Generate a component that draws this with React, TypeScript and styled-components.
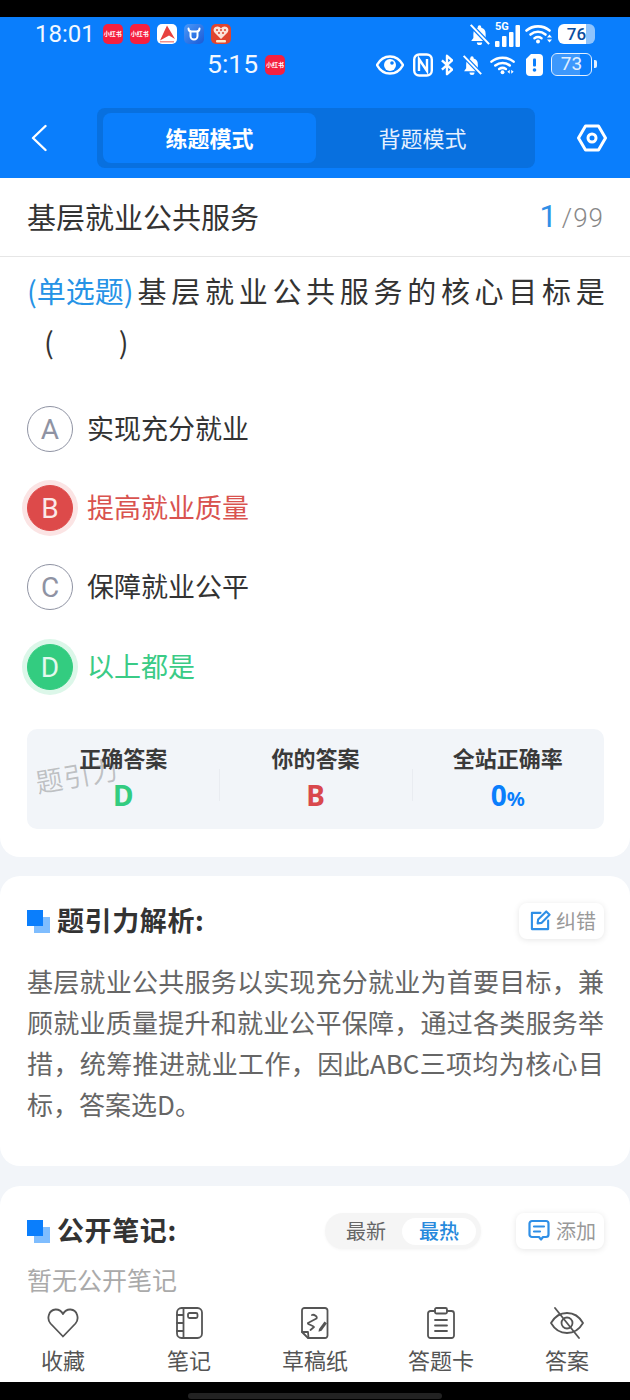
import * as React from 'react';
import styled, { createGlobalStyle } from 'styled-components';

const CJK = `"Noto Sans CJK SC", "Noto Sans", sans-serif`;
const LATIN = `Roboto, "Noto Sans CJK SC", sans-serif`;

const GlobalStyle = createGlobalStyle`
  html, body {
    margin: 0;
    padding: 0;
    background: #000;
  }
  * {
    box-sizing: border-box;
  }
`;

const Page = styled.div`
  width: 630px;
  height: 1400px;
  display: flex;
  flex-direction: column;
  overflow: hidden;
  background: #f2f5f9;
  font-family: ${CJK};
`;

const TopBlack = styled.div`
  height: 17px;
  flex: none;
  background: #000;
`;

const Header = styled.header`
  height: 161px;
  flex: none;
  background: #0a7efc;
  color: #fff;
`;

const StatusRow = styled.div<{ $left: number; $right: number; $height: number }>`
  height: ${(p) => p.$height}px;
  padding: 0 ${(p) => p.$right}px 0 ${(p) => p.$left}px;
  display: flex;
  align-items: center;
  justify-content: space-between;
`;

const Group = styled.div<{ $gap: number }>`
  display: flex;
  align-items: center;
  gap: ${(p) => p.$gap}px;
`;

const Time = styled.span<{ $size: number }>`
  font-family: ${LATIN};
  font-size: ${(p) => p.$size}px;
  line-height: 1;
  color: #f2f8ff;
`;

const AppIcon = styled.div<{ $bg: string }>`
  width: 20px;
  height: 20px;
  border-radius: 5px;
  background: ${(p) => p.$bg};
  color: #fff;
  display: flex;
  align-items: center;
  justify-content: center;
  overflow: hidden;
  font-size: 6px;
  font-weight: 700;
  white-space: nowrap;
  line-height: 1;
`;

const BatteryFull = styled.div`
  width: 37px;
  height: 20px;
  border-radius: 6px;
  background: linear-gradient(90deg, #fff 0, #fff 76%, #8fc4fd 76%, #8fc4fd 100%);
  color: #0a4ea0;
  font-family: ${LATIN};
  font-size: 17px;
  font-weight: 500;
  line-height: 20px;
  text-align: center;
`;

const BatteryOutline = styled.div`
  position: relative;
  width: 41px;
  height: 23px;
  margin-right: 4px;
  border: 1.5px solid #e3f0ff;
  border-radius: 6px;
  background: linear-gradient(90deg, #3d98fc 0, #3d98fc 73%, transparent 73%);
  background-clip: padding-box;
  color: #e3f0ff;
  font-family: ${LATIN};
  font-size: 19px;
  line-height: 20px;
  text-align: center;

  &::after {
    content: '';
    position: absolute;
    right: -6px;
    top: 6px;
    width: 3px;
    height: 8px;
    border-radius: 0 2px 2px 0;
    background: #e3f0ff;
  }
`;

const NavRow = styled.div`
  height: 60px;
  margin-top: 30px;
  display: flex;
  align-items: center;
`;

const BackSlot = styled.div`
  width: 97px;
  padding-left: 31px;
  display: flex;
`;

const ModeSwitch = styled.div`
  width: 438px;
  height: 60px;
  padding: 5px 6px;
  display: grid;
  grid-template-columns: 213px 1fr;
  border-radius: 8px;
  background: #0870df;
`;

const ModeTab = styled.div<{ $active?: boolean }>`
  display: flex;
  align-items: center;
  justify-content: center;
  padding-bottom: 3px;
  border-radius: 8px;
  font-size: 22px;
  font-weight: ${(p) => (p.$active ? 700 : 400)};
  background: ${(p) => (p.$active ? '#0a7efc' : 'transparent')};
  color: ${(p) => (p.$active ? '#fff' : '#e6f1ff')};
`;

const GearSlot = styled.div`
  flex: 1;
  display: flex;
  justify-content: center;
  padding-left: 19px;
`;

const Scroll = styled.main`
  flex: 1;
  min-height: 0;
  overflow: hidden;
`;

const QuestionCard = styled.section`
  height: 679px;
  background: #fff;
  border-radius: 0 0 20px 20px;
`;

const TitleRow = styled.div`
  height: 79px;
  padding: 0 26px 2px 27px;
  display: flex;
  align-items: center;
  justify-content: space-between;
  border-bottom: 1px solid #e6e6e6;
`;

const PaperTitle = styled.div`
  font-size: 29px;
  line-height: 1;
  color: #333;
`;

const Counter = styled.div`
  display: flex;
  align-items: baseline;
  font-family: ${LATIN};
  font-size: 26px;
  font-weight: 300;
  letter-spacing: 1px;
  color: #888;
`;

const CounterNow = styled.span`
  font-size: 31px;
  font-weight: 400;
  color: #2f8fe6;
  margin-right: 4px;
`;

const Question = styled.div`
  margin: 8px 5px 0 27px;
  font-size: 29px;
  line-height: 51px;
  color: #333;
  letter-spacing: 4.7px;
`;

const QuestionType = styled.span`
  color: #2693e6;
  letter-spacing: 0;
  margin-right: 4px;
`;

const QuestionBlank = styled.div`
  padding-left: 17px;
  white-space: pre;
  letter-spacing: 0;
`;

const OptionList = styled.div`
  margin: 39px 0 0 27px;
  display: flex;
  flex-direction: column;
  gap: 33px;
`;

const colors = {
  plain: { text: '#333', circle: 'transparent', border: '#8f93a3', letter: '#8f93a3', halo: 'transparent' },
  wrong: { text: '#d9534f', circle: '#dd4a4a', border: '#dd4a4a', letter: '#fbe9e9', halo: '#fbe4e4' },
  right: { text: '#3acb86', circle: '#33cc80', border: '#33cc80', letter: '#e3f9ee', halo: '#dcf7e9' },
};

type OptionKind = keyof typeof colors;

const Option = styled.div`
  display: flex;
  align-items: center;
  gap: 14px;
  height: 46px;

  &:last-child {
    margin-top: 1px;
  }
`;

const OptionCircle = styled.div<{ $kind: OptionKind }>`
  width: 46px;
  height: 46px;
  flex: none;
  display: flex;
  align-items: center;
  justify-content: center;
  border-radius: 50%;
  border: 1.8px solid ${(p) => colors[p.$kind].border};
  background: ${(p) => colors[p.$kind].circle};
  box-shadow: 0 0 0 5px ${(p) => colors[p.$kind].halo};
  color: ${(p) => colors[p.$kind].letter};
  font-family: ${LATIN};
  font-size: 28px;
  font-weight: 400;
`;

const OptionText = styled.div<{ $kind: OptionKind }>`
  padding-bottom: 4px;
  font-size: 27px;
  color: ${(p) => colors[p.$kind].text};
`;

const Stats = styled.div`
  position: relative;
  margin: 39px 26px 0 27px;
  height: 100px;
  padding-top: 14px;
  display: grid;
  grid-template-columns: repeat(3, 1fr);
  border-radius: 10px;
  background: #f2f5f9;
`;

const Stat = styled.div`
  position: relative;
  text-align: center;

  & + &::before {
    content: '';
    position: absolute;
    left: 0;
    top: 26px;
    height: 32px;
    border-left: 1px solid #e9ecf1;
  }
`;

const StatLabel = styled.div`
  font-size: 22px;
  font-weight: 700;
  line-height: 32px;
  margin-top: -2px;
  color: #3a3a3a;
`;

const StatValue = styled.div<{ $color: string }>`
  margin-top: 2px;
  font-family: "Noto Sans", sans-serif;
  font-size: 28px;
  font-weight: 700;
  line-height: 40px;
  color: ${(p) => p.$color};
`;

const Percent = styled.span`
  font-size: 20px;
`;

const Watermark = styled.div`
  position: absolute;
  left: 8px;
  top: 32px;
  font-size: 27px;
  line-height: 1;
  letter-spacing: 1px;
  color: rgba(60, 60, 60, 0.28);
  transform: rotate(-10deg);
`;

const Card = styled.section<{ $height: number }>`
  height: ${(p) => p.$height}px;
  margin-top: ${(p) => (p.$height > 200 ? 19 : 20)}px;
  padding: 27px 26px 0 27px;
  background: #fff;
  border-radius: 20px;
`;

const CardHead = styled.div`
  height: 36px;
  display: flex;
  align-items: center;
`;

const SquareMark = styled.div`
  position: relative;
  width: 23px;
  height: 23px;
  flex: none;
  margin-right: 7px;

  &::before,
  &::after {
    content: '';
    position: absolute;
    width: 16px;
    height: 16px;
  }
  &::before {
    right: 0;
    bottom: 0;
    background: #7fbdfe;
  }
  &::after {
    left: 0;
    top: 0;
    background: #0a7efc;
  }
`;

const CardTitle = styled.div`
  flex: 1;
  padding-bottom: 4px;
  font-size: 27px;
  font-weight: 700;
  line-height: 1;
  letter-spacing: 0.6px;
  color: #333;
`;

const SmallButton = styled.div<{ $left: number; $gap: number }>`
  height: 36px;
  padding: 0 8px 2px ${(p) => p.$left}px;
  display: flex;
  align-items: center;
  gap: ${(p) => p.$gap}px;
  border-radius: 8px;
  background: #fff;
  box-shadow: 0 1px 6px rgba(0, 0, 0, 0.1);
  font-size: 20px;
  color: #999;
`;

const Analysis = styled.p`
  margin: 21px 0 0;
  font-size: 26px;
  line-height: 41px;
  color: #666;
  text-align: justify;
`;

const Sorter = styled.div`
  width: 156px;
  height: 36px;
  margin-right: 35px;
  padding: 5px;
  display: flex;
  align-items: center;
  border-radius: 18px;
  background: #f5f5f5;
  box-shadow: 0 1px 3px rgba(0, 0, 0, 0.04);
`;

const SorterItem = styled.div<{ $active?: boolean }>`
  flex: ${(p) => (p.$active ? '0 0 74px' : '1')};
  height: 27px;
  padding-bottom: 2px;
  display: flex;
  align-items: center;
  justify-content: center;
  border-radius: 14px;
  font-size: 20px;
  font-weight: ${(p) => (p.$active ? 500 : 400)};
  color: ${(p) => (p.$active ? '#2689dc' : '#666')};
  background: ${(p) => (p.$active ? '#fff' : 'transparent')};
`;

const Empty = styled.div`
  margin-top: 12px;
  font-size: 25px;
  line-height: 36px;
  color: #aaa;
`;

const TabBar = styled.nav`
  height: 82px;
  flex: none;
  display: grid;
  grid-template-columns: repeat(5, 1fr);
  background: #fff;
`;

const TabItem = styled.div`
  display: flex;
  flex-direction: column;
  align-items: center;
  font-size: 22px;
  line-height: 30px;
  color: #555;
`;

const TabIcon = styled.div`
  height: 44px;
  padding-top: 1px;
  display: flex;
  align-items: center;
`;

const BottomBlack = styled.div`
  height: 18px;
  flex: none;
  padding-top: 11px;
  display: flex;
  justify-content: center;
  background: #000;
`;

const HomeBar = styled.div`
  width: 254px;
  height: 6px;
  border-radius: 3px;
  background: #222;
`;

const BellOff = ({ size }: { size: number }) => (
  <svg width={size} height={size} viewBox="0 0 24 24" fill="#fff">
    <path d="M10 3.500a2 2 0 0 1 4 0v.8a7 7 0 0 1 5 6.700v5l2.500 3.500h-19L5 16v-5a7 7 0 0 1 5-6.700zM9 21h6a3 3 0 0 1-6 0z" />
    <path d="M2 1 23 23" stroke="#0a7efc" strokeWidth="5" />
    <path d="M2 1 23 23" stroke="#fff" strokeWidth="2.400" />
  </svg>
);

const Signal = () => (
  <svg width="25" height="27" viewBox="0 0 25 27" fill="#fff">
    <text x="0" y="9" fontSize="11" fontWeight="700" fontFamily="Roboto, sans-serif">5G</text>
    <rect x="0" y="20" width="4.500" height="6" rx="1" />
    <rect x="7" y="15" width="4.500" height="11" rx="1" />
    <rect x="14" y="11" width="4.500" height="15" rx="1" />
    <rect x="20.500" y="4" width="4.500" height="22" rx="1" />
  </svg>
);

const Wifi = ({ width, height, arrows }: { width: number; height: number; arrows: 'v' | 'h' }) => (
  <svg width={width} height={height} viewBox="0 0 28 20" fill="none" stroke="#fff" strokeWidth="2.600" strokeLinecap="round">
    <path d="M1.500 6.500C8 1 18 1 24.500 6.500" />
    <path d="M5.500 10.500c4.500-3.600 10.500-3.600 15 0" />
    <path d="M9.500 14.200c2.200-1.500 4.800-1.500 7 0" />
    <circle cx="13" cy="17.500" r="2" fill="#fff" stroke="none" />
    {arrows === 'v' ? (
      <path d="M22 13.500h5l-2.500-3zM22 15.500h5l-2.500 3z" fill="#fff" stroke="none" />
    ) : (
      <path d="M20.500 15v4l-2.500-2zM22 15v4l2.500-2z" fill="#fff" stroke="none" />
    )}
  </svg>
);

const Eye = () => (
  <svg width="28" height="20" viewBox="0 0 28 20">
    <path d="M1 10C4 4.500 8.500 1.500 14 1.500S24 4.500 27 10c-3 5.500-7.500 8.500-13 8.500S4 15.500 1 10z" fill="none" stroke="#fff" strokeWidth="2.400" />
    <circle cx="14" cy="10" r="6" fill="#fff" />
    <circle cx="16" cy="8" r="1.800" fill="#0a7efc" />
  </svg>
);

const Nfc = () => (
  <svg width="20" height="24" viewBox="0 0 20 24" fill="none" stroke="#fff" strokeWidth="2.400">
    <rect x="1.200" y="1.500" width="17.600" height="21" rx="5" />
    <path d="M6 18V6l8 12V6" />
  </svg>
);

const Bluetooth = () => (
  <svg width="12" height="24" viewBox="0 0 13 24" fill="none" stroke="#fff" strokeWidth="2.600" strokeLinejoin="round">
    <path d="M1 7l11 10-5.500 5V2L12 7 1 17" />
  </svg>
);

const SimAlert = () => (
  <svg width="17" height="22" viewBox="0 0 17 22">
    <path d="M5 0h8a4 4 0 0 1 4 4v14a4 4 0 0 1-4 4H4a4 4 0 0 1-4-4V5z" fill="#fff" />
    <rect x="7" y="4.500" width="3" height="8" rx="1" fill="#0a7efc" />
    <circle cx="8.500" cy="16" r="1.800" fill="#0a7efc" />
  </svg>
);

const BackIcon = () => (
  <svg width="16" height="28" viewBox="0 0 16 28" fill="none" stroke="#fff" strokeWidth="2.400" strokeLinecap="round" strokeLinejoin="round">
    <path d="M14.500 2 2 14l12.500 12" />
  </svg>
);

const GearIcon = () => (
  <svg width="30" height="28" viewBox="0 0 30 28" fill="none" stroke="#fff" strokeWidth="3" strokeLinejoin="round">
    <path d="M8.500 2h13L28.500 14l-7 12h-13L1.500 14z" />
    <circle cx="15" cy="14" r="4" />
  </svg>
);

const EditIcon = () => (
  <svg width="21" height="21" viewBox="0 0 22 22" fill="none" stroke="#2f8fe6" strokeWidth="2.200" strokeLinecap="round" strokeLinejoin="round">
    <path d="M11 3H2v17h17v-9" />
    <path d="M8 14l.5-4L17 1.500l3.500 3.500L12 13.500z" />
  </svg>
);

const NoteIcon = () => (
  <svg width="22" height="22" viewBox="0 0 22 22" fill="none" stroke="#2f8fe6" strokeWidth="2.200" strokeLinecap="round" strokeLinejoin="round">
    <path d="M4 2h14a2.500 2.500 0 0 1 2.500 2.500v11A2.500 2.500 0 0 1 18 18h-3l-2 2.500-2-2.500H4a2.500 2.500 0 0 1-2.500-2.500v-11A2.500 2.500 0 0 1 4 2z" />
    <path d="M6 7.500h10M6 12.500h6" />
  </svg>
);

const AcademyLogo = () => (
  <svg width="20" height="20" viewBox="0 0 20 20">
    <path d="M10 1.500 18 15l-6-3.500L3 16.500z" fill="#e8413f" />
    <rect x="3" y="17" width="14" height="1.500" fill="#f0908c" />
  </svg>
);

const BullLogo = () => (
  <svg width="20" height="20" viewBox="0 0 20 20" fill="none" stroke="#fff" strokeWidth="2" strokeLinecap="round">
    <path d="M4.500 4.500c0 2 1.500 3 3 3h5c1.500 0 3-1 3-3" />
    <path d="M6.500 7.500V12a3.500 3.500 0 0 0 7 0V7.500" />
  </svg>
);

const HeartLogo = () => (
  <svg width="20" height="20" viewBox="0 0 20 20">
    <path d="M10 15 3.500 8.500C1.500 6 3 2.500 6.500 2.500c1.500 0 2.700.8 3.500 2 .8-1.200 2-2 3.500-2 3.500 0 5 3.500 3 6z" fill="#fbe3d8" />
    <path d="M5 6h2M9 6h2M13 6h2M7 9h2M11 9h2" stroke="#e0452e" strokeWidth="1.300" />
    <rect x="5" y="16" width="10" height="2.500" rx="1" fill="#fde8c8" />
  </svg>
);

const stroke = { fill: 'none', stroke: '#555', strokeWidth: 1.800, strokeLinecap: 'round', strokeLinejoin: 'round' } as const;

const HeartIcon = () => (
  <svg width="32" height="30" viewBox="0 0 32 30" {...stroke}>
    <path d="M16 28.500 3.500 15.500C-.5 11 1.500 2 8.500 1.500c3.500-.2 6 1.800 7.500 4.500 1.500-2.700 4-4.700 7.500-4.500 7 .5 9 9.500 5 14z" />
  </svg>
);

const NotebookIcon = () => (
  <svg width="27" height="32" viewBox="0 0 27 32" {...stroke}>
    <rect x="1" y="1" width="25" height="30" rx="4.500" />
    <path d="M7.500 1v30M1 8h6.500M1 16h6.500M1 24h6.500" />
    <rect x="12" y="6" width="9.500" height="5" rx="1.500" />
  </svg>
);

const DraftIcon = () => (
  <svg width="28" height="32" viewBox="0 0 28 32" {...stroke}>
    <path d="M3.500 1h20.500a2.500 2.500 0 0 1 2.500 2.500v25a2.500 2.500 0 0 1-2.500 2.500H7l-6-6V3.500A2.500 2.500 0 0 1 3.500 1z" />
    <path d="M7 25l.5 6M1 25h6" />
    <path d="M11 8c2-1 6 2 4.500 3.500L7 16c-1 1 5 2.500 6 4l-3.500 3" />
    <path d="M18 22l5.500-7.500 2.500 1.800-5.500 7.500-3 1z" fill="#555" stroke="none" />
  </svg>
);

const ClipboardIcon = () => (
  <svg width="28" height="32" viewBox="0 0 28 32" {...stroke}>
    <path d="M8 4H3.500A2.500 2.500 0 0 0 1 6.500v22A2.500 2.500 0 0 0 3.500 31h21a2.500 2.500 0 0 0 2.500-2.500v-22A2.500 2.500 0 0 0 24.500 4H20" />
    <rect x="8" y="1" width="12" height="5.500" rx="1.500" />
    <path d="M8 13h12M8 18.500h12M8 24h12" />
  </svg>
);

const HiddenIcon = () => (
  <svg width="34" height="32" viewBox="0 0 34 32" {...stroke}>
    <path d="M1 16C5 9 10.500 6 17 6s12 3 16 10c-4 7-9.500 10-16 10S5 23 1 16z" />
    <circle cx="17" cy="16" r="5.500" />
    <path d="M5 1l24 30" />
  </svg>
);

const tabs = [
  { label: '收藏', icon: <HeartIcon /> },
  { label: '笔记', icon: <NotebookIcon /> },
  { label: '草稿纸', icon: <DraftIcon /> },
  { label: '答题卡', icon: <ClipboardIcon /> },
  { label: '答案', icon: <HiddenIcon /> },
];

const options: { key: string; text: string; kind: OptionKind }[] = [
  { key: 'A', text: '实现充分就业', kind: 'plain' },
  { key: 'B', text: '提高就业质量', kind: 'wrong' },
  { key: 'C', text: '保障就业公平', kind: 'plain' },
  { key: 'D', text: '以上都是', kind: 'right' },
];

export default function App() {
  return (
    <Page>
      <GlobalStyle />
      <TopBlack />
      <Header>
        <StatusRow $left={35} $right={35} $height={34}>
          <Group $gap={8}>
            <Time $size={24}>18:01</Time>
            <Group $gap={7}>
              <AppIcon $bg="#f5203f">小红书</AppIcon>
              <AppIcon $bg="#f5203f">小红书</AppIcon>
              <AppIcon $bg="#fff"><AcademyLogo /></AppIcon>
              <AppIcon $bg="linear-gradient(135deg, #4a98f8, #1a5ad6)"><BullLogo /></AppIcon>
              <AppIcon $bg="#e0452e"><HeartLogo /></AppIcon>
            </Group>
          </Group>
          <Group $gap={5}>
            <BellOff size={21} />
            <Signal />
            <Wifi width={28} height={20} arrows="v" />
            <BatteryFull>76</BatteryFull>
          </Group>
        </StatusRow>
        <StatusRow $left={207} $right={34} $height={27}>
          <Group $gap={7}>
            <Time $size={26.5}>5:15</Time>
            <AppIcon $bg="#f5203f">小红书</AppIcon>
          </Group>
          <Group $gap={8.5}>
            <Eye />
            <Nfc />
            <Bluetooth />
            <BellOff size={20} />
            <Wifi width={27} height={20} arrows="h" />
            <SimAlert />
            <BatteryOutline>73</BatteryOutline>
          </Group>
        </StatusRow>
        <NavRow>
          <BackSlot>
            <BackIcon />
          </BackSlot>
          <ModeSwitch>
            <ModeTab $active>练题模式</ModeTab>
            <ModeTab>背题模式</ModeTab>
          </ModeSwitch>
          <GearSlot>
            <GearIcon />
          </GearSlot>
        </NavRow>
      </Header>
      <Scroll>
        <QuestionCard>
          <TitleRow>
            <PaperTitle>基层就业公共服务</PaperTitle>
            <Counter>
              <CounterNow>1</CounterNow>/99
            </Counter>
          </TitleRow>
          <Question>
            <QuestionType>(单选题)</QuestionType>基层就业公共服务的核心目标是
            <QuestionBlank>(          )</QuestionBlank>
          </Question>
          <OptionList>
            {options.map((o) => (
              <Option key={o.key}>
                <OptionCircle $kind={o.kind}>{o.key}</OptionCircle>
                <OptionText $kind={o.kind}>{o.text}</OptionText>
              </Option>
            ))}
          </OptionList>
          <Stats>
            <Stat>
              <StatLabel>正确答案</StatLabel>
              <StatValue $color="#33cc80">D</StatValue>
            </Stat>
            <Stat>
              <StatLabel>你的答案</StatLabel>
              <StatValue $color="#d9484d">B</StatValue>
            </Stat>
            <Stat>
              <StatLabel>全站正确率</StatLabel>
              <StatValue $color="#0a7efc">
                0<Percent>%</Percent>
              </StatValue>
            </Stat>
            <Watermark>题引力</Watermark>
          </Stats>
        </QuestionCard>
        <Card $height={290}>
          <CardHead>
            <SquareMark />
            <CardTitle>题引力解析:</CardTitle>
            <SmallButton $left={11} $gap={5}>
              <EditIcon />
              纠错
            </SmallButton>
          </CardHead>
          <Analysis>
            基层就业公共服务以实现充分就业为首要目标，兼顾就业质量提升和就业公平保障，通过各类服务举措，统筹推进就业工作，因此ABC三项均为核心目标，答案选D。
          </Analysis>
        </Card>
        <Card $height={150}>
          <CardHead>
            <SquareMark />
            <CardTitle>公开笔记:</CardTitle>
            <Sorter>
              <SorterItem>最新</SorterItem>
              <SorterItem $active>最热</SorterItem>
            </Sorter>
            <SmallButton $left={12} $gap={6}>
              <NoteIcon />
              添加
            </SmallButton>
          </CardHead>
          <Empty>暂无公开笔记</Empty>
        </Card>
      </Scroll>
      <TabBar>
        {tabs.map((t) => (
          <TabItem key={t.label}>
            <TabIcon>{t.icon}</TabIcon>
            {t.label}
          </TabItem>
        ))}
      </TabBar>
      <BottomBlack>
        <HomeBar />
      </BottomBlack>
    </Page>
  );
}
